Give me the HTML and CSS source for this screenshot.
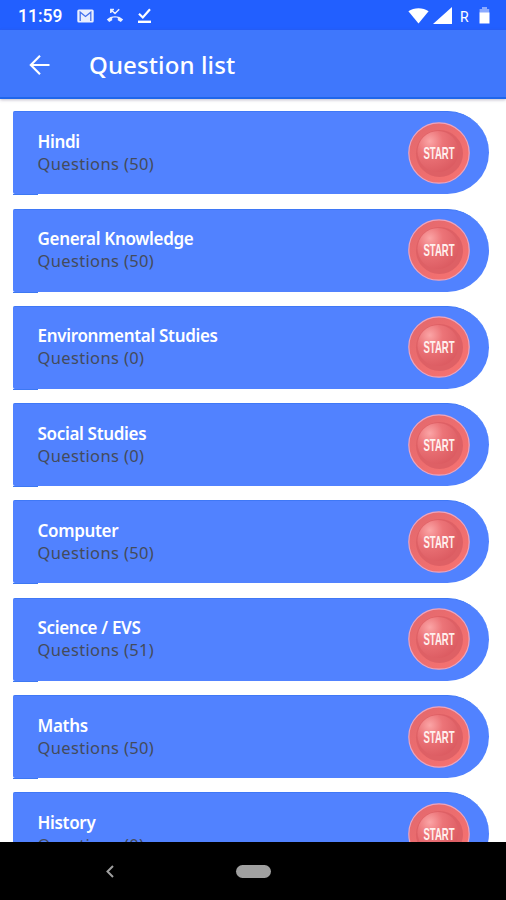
FILE: index.html
```html
<!DOCTYPE html>
<html lang="en">
<head>
	<meta charset="utf-8" />
	<title>Question list</title>
	<link rel="stylesheet" href="styles.css">
</head>
<body>
	<svg width="0" height="0" class="defs">
		<defs>
			<radialGradient id="dome" cx="0.3" cy="0.25" r="0.8">
				<stop offset="0" stop-color="#fba5a6" />
				<stop offset="0.4" stop-color="#ec7478" />
				<stop offset="1" stop-color="#dc5c62" />
			</radialGradient>
			<linearGradient id="rim" x1="0" y1="0" x2="1" y2="1">
				<stop offset="0" stop-color="#e2686d" />
				<stop offset="1" stop-color="#f87371" />
			</linearGradient>
			<symbol id="start" viewBox="0 0 62 62">
				<circle cx="31" cy="31" r="30.2" fill="url(#rim)" stroke="#eda5bd" stroke-width="1.2" />
				<circle cx="31.5" cy="31.5" r="23.5" fill="#de6065" />
				<circle cx="30" cy="29.5" r="20.5" fill="url(#dome)" />
				<text class="start-text" transform="translate(31 37) scale(0.58 1)" text-anchor="middle">START</text>
			</symbol>
		</defs>
	</svg>
	<div class="screen">
		<div class="status">
			<span class="time">11:59</span>
			<svg class="mail" width="17" height="14" viewBox="0 0 17 14">
				<rect x="0.3" y="0.5" width="16.4" height="13" rx="1.5" fill="#e9efff" />
				<path d="M3.2 12V3.2l5.3 4.2 5.3-4.2V12" fill="none" stroke="#4673ee" stroke-width="1.3" />
			</svg>
			<svg class="missed" width="18" height="15" viewBox="0 0 18 15">
				<path d="M4.8 4.9V1.5H8M5 1.7l4 3.8 4.2-4.3" fill="none" stroke="#e9efff" stroke-width="1.5" />
				<path d="M0.8 11.6C4.8 7 13.2 7 17.2 11.6L14.8 14l-3-1.7V10c-1.8-.6-3.8-.6-5.6 0v2.3L3.2 14z" fill="#e9efff" />
			</svg>
			<svg class="done" width="15" height="16" viewBox="0 0 15 16">
				<path d="M2 5.8l3.8 3.7L13 1.2" fill="none" stroke="#fff" stroke-width="2.2" />
				<path d="M1 13.8h13" stroke="#fff" stroke-width="2.4" />
			</svg>
			<svg class="wifi" width="21" height="16" viewBox="0 0 21 16">
				<path d="M0.4 3.2C6-.9 15-.9 20.6 3.2L10.5 15.5z" fill="#fff" />
			</svg>
			<svg class="signal" width="19" height="17" viewBox="0 0 19 17">
				<path d="M0 17L19 0v17z" fill="#fff" />
			</svg>
			<span class="roaming">R</span>
			<svg class="battery" width="11" height="17" viewBox="0 0 11 17">
				<path d="M3 0h5v2h2.2v4H0.6V2H3z" fill="#8baaff" />
				<path d="M0.5 5.5h10v11h-10z" fill="#fff" />
			</svg>
		</div>
		<div class="header">
			<svg width="22" height="22" viewBox="0 0 22 22">
				<path d="M20.5 11H2M11 1.8L1.8 11l9.2 9.2" fill="none" stroke="#fff" stroke-width="2.1" />
			</svg>
			<div class="title">Question list</div>
		</div>
		<div class="list">
			<div class="item">
				<div class="content">
					<div class="name">Hindi</div>
					<div class="count">Questions (50)</div>
				</div>
				<svg class="start"><use href="#start" /></svg>
			</div>
			<div class="item">
				<div class="content">
					<div class="name">General Knowledge</div>
					<div class="count">Questions (50)</div>
				</div>
				<svg class="start"><use href="#start" /></svg>
			</div>
			<div class="item">
				<div class="content">
					<div class="name">Environmental Studies</div>
					<div class="count">Questions (0)</div>
				</div>
				<svg class="start"><use href="#start" /></svg>
			</div>
			<div class="item">
				<div class="content">
					<div class="name">Social Studies</div>
					<div class="count">Questions (0)</div>
				</div>
				<svg class="start"><use href="#start" /></svg>
			</div>
			<div class="item">
				<div class="content">
					<div class="name">Computer</div>
					<div class="count">Questions (50)</div>
				</div>
				<svg class="start"><use href="#start" /></svg>
			</div>
			<div class="item">
				<div class="content">
					<div class="name">Science / EVS</div>
					<div class="count">Questions (51)</div>
				</div>
				<svg class="start"><use href="#start" /></svg>
			</div>
			<div class="item">
				<div class="content">
					<div class="name">Maths</div>
					<div class="count">Questions (50)</div>
				</div>
				<svg class="start"><use href="#start" /></svg>
			</div>
			<div class="item">
				<div class="content">
					<div class="name">History</div>
					<div class="count">Questions (0)</div>
				</div>
				<svg class="start"><use href="#start" /></svg>
			</div>
		</div>
		<div class="navbar">
			<svg class="back" width="8" height="13" viewBox="0 0 8 13">
				<path d="M7 1L1.5 6.5 7 12" fill="none" stroke="#a0a0a0" stroke-width="2" />
			</svg>
			<div class="home"></div>
		</div>
	</div>
</body>
</html>
```
FILE: styles.css
```css
body {
	margin: 0;
	font-family: "Noto Sans", "Open Sans", sans-serif;
	background: #fff;
}
.defs {
	display: block;
}
.screen {
	width: 506px;
	height: 900px;
	display: flex;
	flex-direction: column;
	overflow: hidden;
}
.status {
	flex: none;
	height: 30px;
	box-sizing: border-box;
	padding: 1px 16px 0 18px;
	display: flex;
	align-items: center;
	background: #225fff;
	color: #fff;
	font-family: Roboto, sans-serif;
}
.time {
	width: 59px;
	font-size: 17.5px;
	font-weight: 500;
	line-height: 30px;
}
.missed {
	margin-left: 12px;
}
.done {
	margin-left: 13px;
}
.wifi {
	margin-left: auto;
}
.signal {
	margin-left: 4px;
}
.roaming {
	margin: 2px 10px 0 8px;
	width: 9px;
	font-size: 14px;
}
.header {
	flex: none;
	height: 69px;
	box-sizing: border-box;
	padding: 2px 0 0 29px;
	display: flex;
	align-items: center;
	background: #3f77fc;
	border-bottom: 2px solid #1f66ea;
	box-shadow: 0 1px 3px rgba(80, 60, 100, 0.35);
	color: #fff;
}
.title {
	margin-left: 38px;
	font-size: 24px;
	font-weight: 500;
	line-height: 30px;
	letter-spacing: 0.12px;
}
.list {
	flex: 1;
	min-height: 0;
	padding: 12.3px 17px 0 13px;
	display: flex;
	flex-direction: column;
	gap: 14.3px;
	overflow: hidden;
}
.item {
	flex: none;
	position: relative;
	height: 83px;
	box-sizing: border-box;
	padding: 0 19px 1px 24.5px;
	display: flex;
	align-items: center;
	justify-content: space-between;
	background: #5182ff;
	border-top: 1px solid #3f78f6;
	border-radius: 2px 42px 42px 2px;
}
.item::after {
	content: "";
	position: absolute;
	left: 0;
	bottom: -1px;
	width: 25px;
	height: 1px;
	background: #3d78f2;
}
.name {
	font-size: 17px;
	font-weight: 600;
	line-height: 22px;
	letter-spacing: -0.32px;
	color: #fff;
}
.count {
	font-size: 16.5px;
	line-height: 22px;
	letter-spacing: 0.35px;
	color: #444b5b;
}
.start {
	width: 62px;
	height: 62px;
}
.start-text {
	font-family: "Liberation Sans", sans-serif;
	font-size: 16.5px;
	font-weight: bold;
	fill: #fff0ee;
}
.navbar {
	flex: none;
	height: 58px;
	box-sizing: border-box;
	padding-left: 106px;
	display: flex;
	align-items: center;
	background: #000;
}
.home {
	margin-left: 122px;
	width: 35px;
	height: 13px;
	border-radius: 7px;
	background: #a0a0a0;
}
```
